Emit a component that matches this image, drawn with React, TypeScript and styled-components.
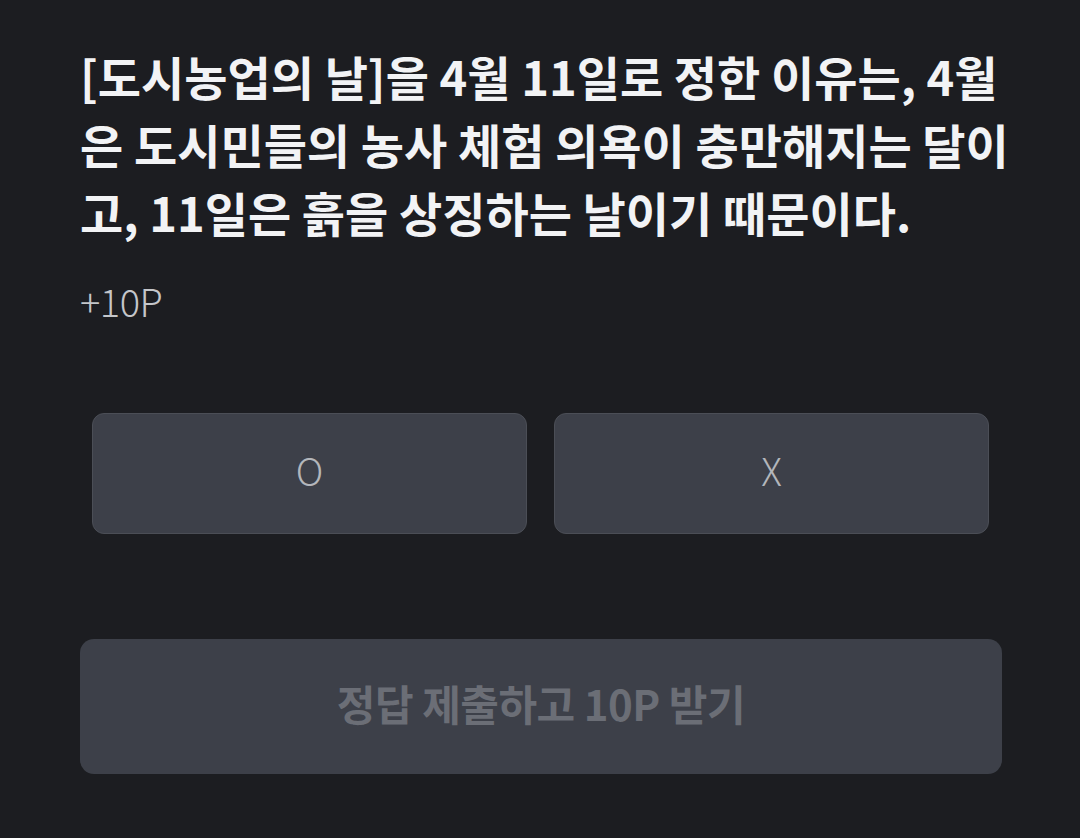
import styled, { createGlobalStyle } from 'styled-components';

const GlobalStyle = createGlobalStyle`
    html, body {
        margin: 0;
        padding: 0;
        background-color: #1c1d21;
    }
    body {
        font-family: "Noto Sans CJK KR", "Noto Sans", sans-serif;
    }
`;

export default function App() {
    return (
        <>
            <GlobalStyle/>
            <Page>
                <Question>
                    [도시농업의 날]을 4월 11일로 정한 이유는, 4월은 도시민들의 농사 체험 의욕이 충만해지는 달이고, 11일은 흙을 상징하는 날이기 때문이다.
                </Question>
                <Point>+10P</Point>
                <ChoiceRow>
                    <Choice>O</Choice>
                    <Choice>X</Choice>
                </ChoiceRow>
                <SubmitButton disabled>정답 제출하고 10P 받기</SubmitButton>
            </Page>
        </>
    )
}

const Page = styled.div`
    min-height: 838px;
    box-sizing: border-box;
    padding: 42px 78px 0 80px;
    background-color: #1c1d21;
`;

const Question = styled.p`
    margin: 0 -14px 0 0;
    color: #f2f3f5;
    font-size: 47px;
    font-weight: 700;
    line-height: 68px;
    word-break: break-all;
`;

const Point = styled.div`
    margin-top: 31px;
    color: #c4c6ca;
    font-size: 38px;
    font-weight: 300;
    line-height: 48px;
    letter-spacing: -0.5px;
`;

const ChoiceRow = styled.div`
    display: grid;
    grid-template-columns: 1fr 1fr;
    gap: 27px;
    margin-top: 88px;
    padding: 0 13px 0 12px;
`;

const Choice = styled.button`
    height: 121px;
    border: 1.5px solid #4b4e56;
    border-radius: 12px;
    background-color: #3d4049;
    color: #b3b6bb;
    font-family: "Noto Sans CJK KR", "Noto Sans", sans-serif;
    font-size: 38px;
    font-weight: 300;
    padding: 0 0 8px;
`;

const SubmitButton = styled.button`
    display: block;
    width: 100%;
    height: 135px;
    margin-top: 105px;
    padding: 0 0 8px;
    border: none;
    border-radius: 14px;
    background-color: #3d4049;
    color: #6b6e76;
    font-family: "Noto Sans CJK KR", "Noto Sans", sans-serif;
    font-size: 42px;
    font-weight: 700;
    letter-spacing: -0.5px;
`;
